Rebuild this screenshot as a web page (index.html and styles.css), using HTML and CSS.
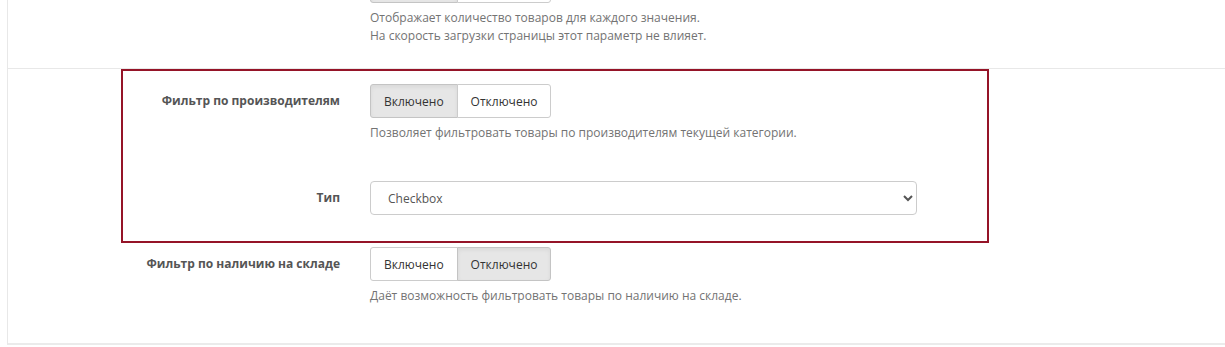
FILE: index.html
```html
<!DOCTYPE html>
<html lang="ru">
<head>
    <meta charset="UTF-8">
    <meta name="viewport" content="width=device-width, initial-scale=1.0">
    <title>Фильтр</title>
    <link rel="stylesheet" href="styles.css">
</head>
<body>
    <div class="panel">
        <div class="section section-top">
            <div class="form-row">
                <div class="form-label">Показывать количество</div>
                <div class="form-control">
                    <div class="btn-group">
                        <button class="btn active">Включено</button>
                        <button class="btn">Отключено</button>
                    </div>
                    <p class="help">Отображает количество товаров для каждого значения.<br>На скорость загрузки страницы этот параметр не влияет.</p>
                </div>
            </div>
        </div>

        <div class="section section-main">
            <div class="form-row">
                <div class="form-label">Фильтр по производителям</div>
                <div class="form-control">
                    <div class="btn-group">
                        <button class="btn active">Включено</button>
                        <button class="btn">Отключено</button>
                    </div>
                    <p class="help">Позволяет фильтровать товары по производителям текущей категории.</p>
                </div>
            </div>

            <div class="form-row">
                <div class="form-label">Тип</div>
                <div class="form-control">
                    <select class="select">
                        <option>Checkbox</option>
                        <option>Radio</option>
                        <option>Select</option>
                    </select>
                </div>
            </div>

            <div class="form-row">
                <div class="form-label">Фильтр по наличию на складе</div>
                <div class="form-control">
                    <div class="btn-group">
                        <button class="btn">Включено</button>
                        <button class="btn active">Отключено</button>
                    </div>
                    <p class="help">Даёт возможность фильтровать товары по наличию на складе.</p>
                </div>
            </div>

            <div class="highlight"></div>
        </div>
    </div>
</body>
</html>
```

FILE: styles.css
```css
body {
    margin: 0;
    background: #fff;
    font-family: "Open Sans", "Noto Sans", sans-serif;
    font-size: 12px;
    color: #333;
    overflow: hidden;
}
.panel {
    margin: -46px 0 0 7px;
    border-left: 1px solid #e8e8e8;
    border-bottom: 2px solid #ebebeb;
    background: #fff;
}
.section {
    position: relative;
    display: flex;
    flex-direction: column;
    gap: 32px;
    padding-top: 15px;
}
.section-top {
    padding-bottom: 16px;
}
.section-main {
    border-top: 1px solid #e8e8e8;
    padding-bottom: 31px;
}
.form-row {
    display: flex;
    align-items: flex-start;
}
.form-label {
    width: 332px;
    margin-right: 30px;
    text-align: right;
    font-weight: bold;
    line-height: 34px;
    color: #555;
}
.form-control {
    flex: 0 0 547px;
}
.btn-group {
    display: flex;
}
.btn {
    height: 34px;
    padding: 0 13px;
    font-family: inherit;
    font-size: 12px;
    color: #333;
    background: #fff;
    border: 1px solid #ccc;
    cursor: pointer;
}
.btn:first-child {
    border-radius: 3px 0 0 3px;
}
.btn:last-child {
    border-radius: 0 3px 3px 0;
    margin-left: -1px;
}
.btn.active {
    background: #e6e6e6;
    border-color: #c4c4c4;
    box-shadow: inset 0 2px 4px rgba(0,0,0,0.06);
}
.help {
    margin: 6px 0 7px;
    line-height: 18px;
    color: #737373;
}
.select {
    width: 547px;
    height: 34px;
    padding: 0 13px;
    font-family: inherit;
    font-size: 12px;
    color: #555;
    background: #fff;
    border: 1px solid #ccc;
    border-radius: 4px;
}
.highlight {
    position: absolute;
    top: 0;
    left: 113px;
    width: 868px;
    height: 174px;
    box-sizing: border-box;
    border: 2px solid #951428;
    pointer-events: none;
}
```
